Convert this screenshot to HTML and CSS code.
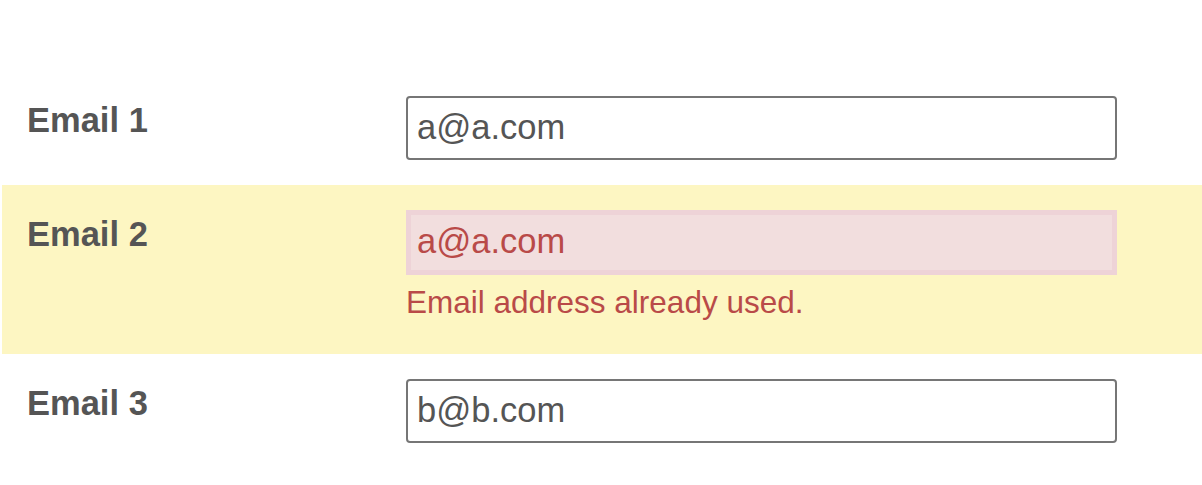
FILE: index.html
```html
<!DOCTYPE html>
<html>
<head>
<meta charset="utf-8">
<link rel="stylesheet" href="styles.css">
</head>
<body>
<form class="form">
  <div class="row">
    <label class="label" for="e1">Email 1</label>
    <div class="control">
      <input class="input" id="e1" type="text" value="a@a.com">
    </div>
  </div>
  <div class="row row-warning">
    <label class="label" for="e2">Email 2</label>
    <div class="control">
      <input class="input input-error" id="e2" type="text" value="a@a.com">
      <div class="help-error">Email address already used.</div>
    </div>
  </div>
  <div class="row">
    <label class="label" for="e3">Email 3</label>
    <div class="control">
      <input class="input" id="e3" type="text" value="b@b.com">
    </div>
  </div>
</form>
</body>
</html>
```

FILE: styles.css
```css
html, body {
  margin: 0;
  padding: 0;
  background: #ffffff;
}

body {
  font-family: "Liberation Sans", Arial, sans-serif;
  color: #555555;
}

.form {
  padding: 71px 0 0 2px;
}

.row {
  display: grid;
  grid-template-columns: 379px 711px;
  padding: 25px 0 25px 25px;
}

.row-warning {
  background: #fdf6c2;
}

.label {
  font-size: 34.5px;
  font-weight: bold;
  line-height: 36px;
  padding-top: 6px;
  color: #555555;
}

.control {
  display: flex;
  flex-direction: column;
}

.input {
  box-sizing: border-box;
  width: 711px;
  height: 64px;
  margin: 0;
  padding: 0 9px 2px;
  font-family: "Liberation Sans", Arial, sans-serif;
  font-size: 34.5px;
  color: #555555;
  background: #ffffff;
  border: 2px solid #767676;
  border-radius: 4px;
  outline: none;
}

.input-error {
  height: 65px;
  background: #f2dede;
  border: 5px solid #eed3d7;
  border-radius: 0;
  color: #b94a48;
  padding: 0 6px 2px;
}

.help-error {
  font-size: 31.5px;
  line-height: 36px;
  margin-top: 9px;
  padding-bottom: 9px;
  color: #b94a48;
}
```
